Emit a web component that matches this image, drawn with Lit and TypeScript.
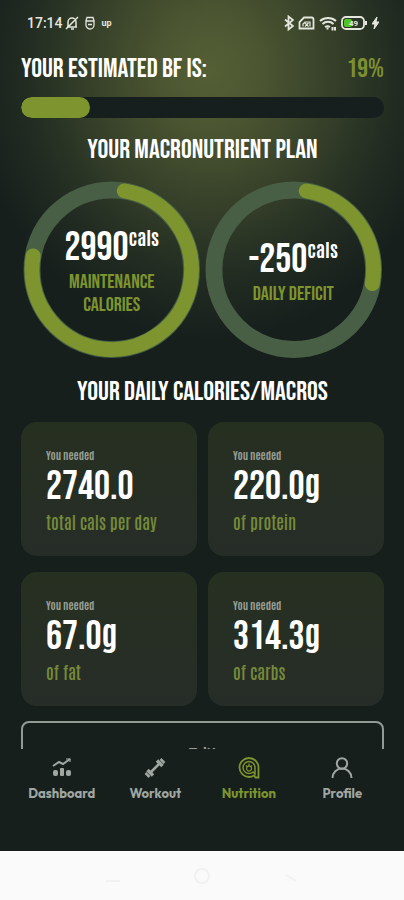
import { LitElement, html, css, svg } from "lit";
import { customElement, property } from "lit/decorators.js";

const display = css`"Bebas Neue", "Roboto Condensed", "Liberation Sans", sans-serif`;
const condensed = css`Antonio, "Roboto Condensed", "Liberation Sans", sans-serif`;

@customElement("status-bar")
class StatusBar extends LitElement {
  static styles = css`
    :host {
      display: flex;
      justify-content: space-between;
      align-items: center;
      height: 46px;
      padding: 0 25px 0 27px;
      color: #e4e7de;
      font: 500 14px/20px Roboto, sans-serif;
    }
    .side { display: flex; align-items: center; }
    .left { gap: 2px; }
    .right { gap: 4px; }
    .up { font: 700 9px/12px Roboto, sans-serif; }
    .dot { margin: 0 5px 0 4px; }
    svg { display: block; fill: none; stroke: currentColor; }
  `;
  render() {
    return html`
      <div class="side left">
        <span>17:14</span>
        <svg width="14" height="16" viewBox="0 0 14 16" stroke-width="1.5">
          <path d="M2 12h10M3 12V7a4 4 0 0 1 8 0v5M6 14h3M1 14L13 2" />
        </svg>
        <svg class="dot" width="10" height="14" viewBox="0 0 10 14" stroke-width="1.3">
          <path d="M2 1.500h6l1 3V9a4 4 0 0 1-8 0V4.500zM1.500 5h7M3 8.500h4" />
        </svg>
        <span class="up">up</span>
      </div>
      <div class="side right">
        <svg width="10" height="16" viewBox="1 0 10 16" stroke-width="1.8">
          <path d="M2 4.500l8 6.500-4.500 3.500v-13L10 5 2 11.500" />
        </svg>
        <svg width="17" height="14" viewBox="0 0 17 14" stroke-width="1.8">
          <path d="M6 1.500h7.500a2 2 0 0 1 2 2v9h-14V6z" />
          <path d="M5 10.500V8l2-2h5v4.500M7 7l3.500 3.500M10.500 7L7 10.500" stroke-width="1.200" />
        </svg>
        <svg width="18" height="15" viewBox="0 0 18 15" stroke-width="2">
          <path d="M1 5a12 12 0 0 1 16 0M3.500 8a8 8 0 0 1 11 0M6 11a5 5 0 0 1 5 0" />
          <path d="M7.500 12.500h2M13.500 11v3.500M16 11v3.500" />
        </svg>
        <svg width="27" height="14" viewBox="0 0 27 14" stroke-width="1.800">
          <rect x="1" y="1" width="22" height="12" rx="4" />
          <rect x="3" y="3" width="8" height="8" rx="2" fill="#50c52a" stroke="none" />
          <path d="M25 5v4" stroke-width="2" />
          <text x="8" y="10" font-size="8" font-weight="700" font-family="Roboto" fill="currentColor" stroke="none">49</text>
        </svg>
        <svg width="7" height="12" viewBox="0 0 7 12" stroke="none">
          <path d="M5 0L0 7h3l-1 5 5-7H4z" fill="currentColor" />
        </svg>
      </div>
    `;
  }
}

@customElement("calorie-ring")
class CalorieRing extends LitElement {
  @property() value = "";
  @property() label = "";
  @property({ type: Number }) from = 0;
  @property({ type: Number }) to = 0;
  static styles = css`
    :host { display: grid; flex: 1; min-width: 0; }
    svg, .text { grid-area: 1 / 1; }
    svg { display: block; width: 100%; fill: none; }
    .track { stroke: #485e45; stroke-width: 17; }
    .arc { stroke: #7d942f; stroke-width: 15; stroke-linecap: round; }
    .text {
      place-self: center;
      display: flex;
      flex-direction: column;
      align-items: center;
      width: 110px;
      padding-top: 3px;
      text-align: center;
      font-family: ${display};
    }
    .value { display: flex; color: #fff; font-size: 40px; line-height: 46px; }
    .unit { font: 700 19px/24px ${condensed}; }
    .label { color: #7d942f; font-size: 20px; line-height: 23px; }
  `;
  private point(deg: number) {
    const a = (deg * Math.PI) / 180;
    return `${(89 + 80 * Math.sin(a)).toFixed(2)} ${(89 - 80 * Math.cos(a)).toFixed(2)}`;
  }
  render() {
    const large = this.to - this.from > 180 ? 1 : 0;
    return html`
      <svg viewBox="0 0 178 178" aria-hidden="true">
        ${svg`<circle class="track" cx="89" cy="89" r="80" />
        <path class="arc" d="M${this.point(this.from)}A80 80 0 ${large} 1 ${this.point(this.to)}" />`}
      </svg>
      <div class="text">
        <div class="value">${this.value}<span class="unit">cals</span></div>
        <div class="label">${this.label}</div>
      </div>
    `;
  }
}

@customElement("macro-card")
class MacroCard extends LitElement {
  @property() value = "";
  @property() unit = "";
  @property() label = "";
  static styles = css`
    :host {
      display: flex;
      flex-direction: column;
      padding: 24px 24px 24px 25px;
      border-radius: 16px;
      background: linear-gradient(#263020, #262d28);
      font-family: ${condensed};
    }
    .hint { color: #979e94; font-size: 11px; line-height: 18px; font-weight: 700; }
    .value { display: flex; align-items: baseline; color: #fff; font: 40px/46px ${display}; }
    .unit { font: 700 33px/30px ${condensed}; }
    .label { color: #75893a; font-size: 17px; line-height: 22px; font-weight: 600; }
  `;
  render() {
    return html`
      <span class="hint">You needed</span>
      <span class="value">${this.value}${this.unit ? html`<span class="unit">${this.unit}</span>` : ""}</span>
      <span class="label">${this.label}</span>
    `;
  }
}

const tabs = [
  {
    name: "Dashboard",
    icon: svg`<path d="M2 9l6-4 4 2 7-5" stroke-width="2"/><path d="M15 2h4v3" stroke-width="1.200"/>
      <g fill="currentColor" stroke="none"><rect x="2" y="13" width="5" height="6" rx="2"/><rect x="9" y="11" width="4" height="8" rx="1"/><rect x="15" y="13" width="5" height="6" rx="2"/></g>`,
  },
  {
    name: "Workout",
    icon: svg`<path d="M7 15l8-8" stroke-width="2.500"/><path d="M13 3.500l5.500 5.500M3.500 13l5.500 5.500" stroke-width="3.500"/>
      <path d="M16.500 2l4 4M1.500 16l4 4" stroke-width="2.500"/>`,
  },
  {
    name: "Nutrition",
    icon: svg`<path d="M20.500 20.500V10.500A9.500 9.500 0 1 0 11 20a9 9 0 0 0 5-1.500l1.500 2z" stroke-width="1.800"/>
      <path d="M17 17v-6.500a6 6 0 1 0-6 6 6 6 0 0 0 4-1.500z" stroke-width="1.500"/>
      <path d="M11 6.500v3M11 9a2.500 2.500 0 1 0 .1 0M8 8.500l1.500 1.500M14 8.500l-1.500 1.500" stroke-width="1.300"/>`,
  },
  {
    name: "Profile",
    icon: svg`<circle cx="11" cy="6.500" r="5.200" stroke-width="2"/><path d="M1.500 21a9.500 9.500 0 0 1 19 0" stroke-width="2"/>`,
  },
];

@customElement("app-root")
class AppRoot extends LitElement {
  static styles = css`
    :host {
      display: flex;
      flex-direction: column;
      height: 100vh;
      background:
        radial-gradient(ellipse 240px 270px at 52% 70px, #555f35 0%, #4b5531 22%, #38422a 48%, #232d22 75%, #161f1c 100%),
        #161f1c;
    }
    .content {
      flex: 1;
      min-height: 0;
      overflow: hidden;
      padding: 6px 20px 0 21px;
      font-family: ${display};
    }
    .estimate {
      display: flex;
      justify-content: space-between;
      color: #fff;
      font-size: 27px;
      line-height: 34px;
    }
    .percent { color: #7d8f33; }
    progress {
      appearance: none;
      display: block;
      width: 100%;
      height: 21px;
      margin: 11px 0 15px;
      border: 0;
      border-radius: 11px;
      overflow: hidden;
      background: #161f1d;
    }
    progress::-webkit-progress-bar { background: #161f1d; }
    progress::-webkit-progress-value { background: #7d942f; border-radius: 11px; }
    h2 {
      margin: 0;
      color: #fff;
      text-align: center;
      font-size: 27px;
      line-height: 34px;
      font-weight: 400;
    }
    .rings { display: flex; gap: 4px; padding: 14px 2px 16px; }
    .cards { display: grid; grid-template-columns: 1fr 1fr; gap: 16px 11px; padding: 13px 0 15px; }
    .edit {
      display: block;
      width: 100%;
      height: 64px;
      border: 2px solid #929a95;
      border-radius: 8px;
      background: none;
      color: #979e99;
      font: 600 16px/20px Outfit, Inter, sans-serif;
    }
    nav {
      display: grid;
      grid-template-columns: repeat(4, 1fr);
      align-items: start;
      height: 94px;
      padding: 8px 15px 0;
      background: #161f1c;
    }
    a {
      display: flex;
      flex-direction: column;
      align-items: center;
      gap: 4px;
      color: #a0a6a1;
      font: 700 13px/20px Outfit, Inter, sans-serif;
      text-decoration: none;
    }
    .active { color: #7d942f; }
    a svg { display: block; width: 22px; height: 22px; fill: none; stroke: currentColor; }
    .system {
      display: flex;
      justify-content: space-around;
      align-items: center;
      height: 49px;
      padding: 0 68px;
      background: #fafafa;
    }
    .system svg { display: block; fill: none; stroke: #f1f1f1; stroke-width: 2; }
  `;
  render() {
    return html`
      <status-bar></status-bar>
      <main class="content">
        <div class="estimate"><span id="bf">YOUR ESTIMATED BF IS:</span><span class="percent">19%</span></div>
        <progress max="100" value="19" aria-labelledby="bf"></progress>
        <h2>YOUR MACRONUTRIENT PLAN</h2>
        <div class="rings">
          <calorie-ring value="2990" label="MAINTENANCE CALORIES" from="9" to="280"></calorie-ring>
          <calorie-ring value="-250" label="DAILY DEFICIT" from="9" to="100"></calorie-ring>
        </div>
        <h2>YOUR DAILY CALORIES/MACROS</h2>
        <div class="cards">
          <macro-card value="2740.0" label="total cals per day"></macro-card>
          <macro-card value="220.0" unit="g" label="of protein"></macro-card>
          <macro-card value="67.0" unit="g" label="of fat"></macro-card>
          <macro-card value="314.3" unit="g" label="of carbs"></macro-card>
        </div>
        <button class="edit">Edit</button>
      </main>
      <nav>
        ${tabs.map(
          (t) => html`<a href="#${t.name.toLowerCase()}" class=${t.name === "Nutrition" ? "active" : ""}>
            <svg viewBox="0 0 22 22" aria-hidden="true">${t.icon}</svg>${t.name}</a>`
        )}
      </nav>
      <div class="system">
        <svg width="18" height="18" viewBox="0 0 18 18"><path d="M2 14h14" /></svg>
        <svg width="18" height="18" viewBox="0 0 18 18"><circle cx="9" cy="9" r="7" /></svg>
        <svg width="18" height="18" viewBox="0 0 18 18"><path d="M4 8l10 6" /></svg>
      </div>
    `;
  }
}
